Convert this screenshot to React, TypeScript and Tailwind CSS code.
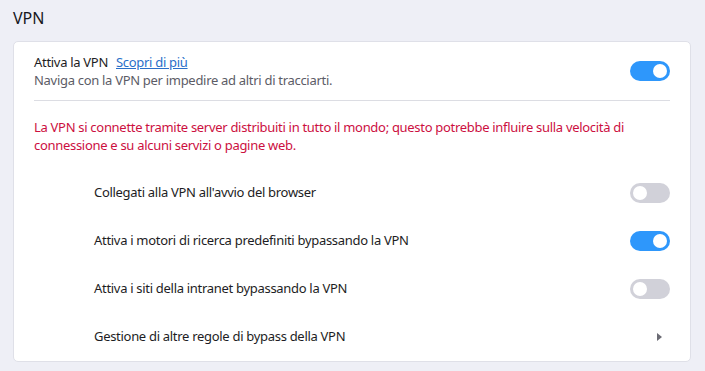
import { useState } from "react";

function Toggle({ on }: { on: boolean }) {
  return (
    <div
      className={
        "flex h-5 w-10 shrink-0 items-center rounded-full px-[3px] " +
        (on ? "justify-end bg-[#2e97fb]" : "justify-start bg-[#d1d1d9]")
      }
    >
      <div className="h-[14px] w-[14px] rounded-full bg-white" />
    </div>
  );
}

const options = [
  { label: "Collegati alla VPN all'avvio del browser", on: false },
  { label: "Attiva i motori di ricerca predefiniti bypassando la VPN", on: true },
  { label: "Attiva i siti della intranet bypassando la VPN", on: false },
];

export default function App() {
  const [vpnOn] = useState(true);

  return (
    <main className="min-h-screen bg-[#eeeff6] px-[13px] pt-2 pb-3 font-['Noto_Sans',sans-serif] text-[13px] tracking-[-0.3px] text-[#1d1d24]">
      <h1 className="text-[16px] font-normal leading-5 tracking-normal text-[#17171c]">VPN</h1>

      <section className="mt-[13px] w-[678px] rounded-[5px] border border-[#dfe0e8] bg-white px-5">
        {/* Main switch */}
        <div className="flex items-center justify-between border-b border-[#dcdde3] pt-[11px] pb-[11px]">
          <div className="leading-[18px]">
            <div>
              Attiva la VPN
              <a href="#" className="ml-[8px] text-[#2a6fc9] underline">
                Scopri di più
              </a>
            </div>
            <div className="text-[#5c5c66]">Naviga con la VPN per impedire ad altri di tracciarti.</div>
          </div>
          <Toggle on={vpnOn} />
        </div>

        <p className="pt-[17px] pb-[15px] leading-[18px] text-[#cc0f3f]">
          La VPN si connette tramite server distribuiti in tutto il mondo; questo potrebbe influire sulla velocità di
          connessione e su alcuni servizi o pagine web.
        </p>

        <div>
          {options.map((o) => (
            <div key={o.label} className="flex h-12 items-center justify-between pl-[60px]">
              <span>{o.label}</span>
              <Toggle on={o.on} />
            </div>
          ))}
          <div className="flex h-12 items-center justify-between pl-[60px]">
            <span>Gestione di altre regole di bypass della VPN</span>
            <svg width="10" height="10" viewBox="0 0 10 10" className="mr-[6px]">
              <path d="M3 1 L8 5 L3 9 Z" fill="#6b6b74" />
            </svg>
          </div>
        </div>
      </section>
    </main>
  );
}
